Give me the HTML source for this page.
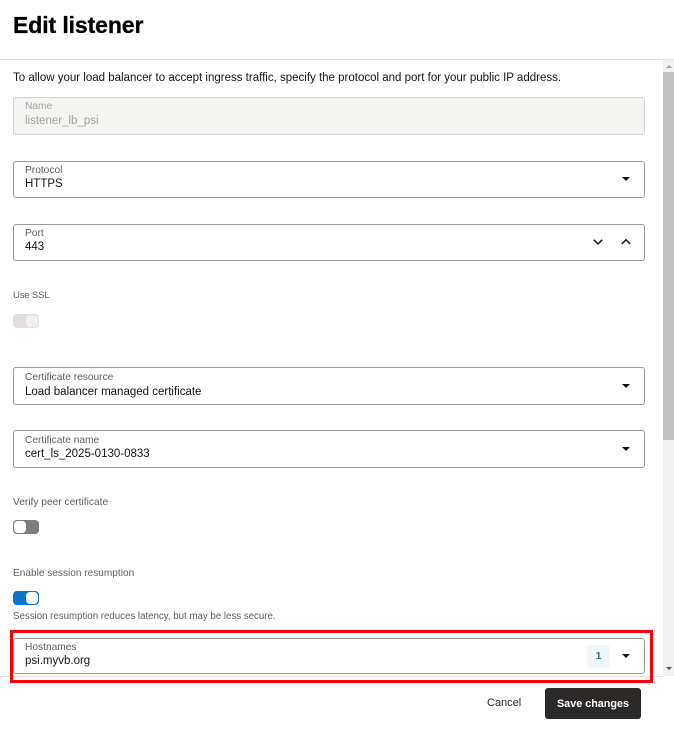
<!DOCTYPE html>
<html><head><meta charset="utf-8"><style>
html,body{margin:0;padding:0;background:#fff}
body{width:674px;height:734px;position:relative;overflow:hidden;font-family:"Liberation Sans",sans-serif;color:#161513}
div,span{position:absolute;white-space:nowrap}
.f{left:13px;width:630px;height:35px;border:1px solid #9c9a98;border-bottom:1.5px solid #9c9a98;border-radius:3px;background:#fff}
.l{left:25px;font-size:10.2px;line-height:12px;color:#5f5e5c}
.v{left:25px;font-size:11.5px;line-height:14px;color:#161513}
.h{left:13px;font-size:10.2px;line-height:12px;color:#5f5e5c}
.a{width:0;height:0;border-left:4px solid transparent;border-right:4px solid transparent;border-top:4px solid #161513;left:622px}
</style></head><body>
<div style="left:13px;top:10px;font-size:23px;font-weight:bold;line-height:30px;color:#000;-webkit-text-stroke:.3px #000;letter-spacing:-.1px">Edit listener</div>
<div style="left:0;top:59px;width:674px;height:1px;background:#e4e2e0"></div>
<div style="left:13px;top:71px;font-size:11.5px;line-height:15px;color:#161513">To allow your load balancer to accept ingress traffic, specify the protocol and port for your public IP address.</div>

<div class="f" style="top:97px;height:36px;background:#f4f4f3;border-color:#d4d3d1"></div>
<div class="l" style="top:101px;color:#a3a19f">Name</div>
<div class="v" style="top:114px;color:#a3a19f">listener_lb_psi</div>

<div class="f" style="top:161px"></div>
<div class="l" style="top:165px">Protocol</div>
<div class="v" style="top:177px">HTTPS</div>
<div class="a" style="top:177px"></div>

<div class="f" style="top:224px"></div>
<div class="l" style="top:228px">Port</div>
<div class="v" style="top:240px">443</div>
<svg style="position:absolute;left:592px;top:238px" width="40" height="9" viewBox="0 0 40 9"><path d="M1.8 1.8L6 6L10.2 1.8M29.8 6L34 1.8L38.2 6" fill="none" stroke="#161513" stroke-width="1.5"/></svg>

<div class="h" style="top:290px;font-size:9.6px;letter-spacing:-.2px">Use SSL</div>
<div style="left:13px;top:314px;width:26px;height:14px;border-radius:4px;background:#dfdedc"></div>
<div style="left:26px;top:315px;width:12px;height:12px;border-radius:4px;background:#f1f0ef"></div>

<div class="f" style="top:367px;height:36px"></div>
<div class="l" style="top:372px">Certificate resource</div>
<div class="v" style="top:385px">Load balancer managed certificate</div>
<div class="a" style="top:384px"></div>

<div class="f" style="top:430px;height:36px"></div>
<div class="l" style="top:435px">Certificate name</div>
<div class="v" style="top:447px">cert_ls_2025-0130-0833</div>
<div class="a" style="top:447px"></div>

<div class="h" style="top:497px">Verify peer certificate</div>
<div style="left:13px;top:520px;width:26px;height:14px;border-radius:4px;background:#7f7e7c"></div>
<div style="left:14px;top:521px;width:12px;height:12px;border-radius:4px;background:#fff"></div>

<div class="h" style="top:568px;font-size:10.1px">Enable session resumption</div>
<div style="left:13px;top:591px;width:26px;height:14px;border-radius:4px;background:#0f72c4"></div>
<div style="left:26px;top:592px;width:12px;height:12px;border-radius:4px;background:#fff"></div>
<div class="h" style="top:611px;font-size:9.7px">Session resumption reduces latency, but may be less secure.</div>

<div class="f" style="top:638px;height:34px"></div>
<div class="l" style="top:642px">Hostnames</div>
<div class="v" style="top:654px">psi.myvb.org</div>
<div style="left:587px;top:645px;width:23px;height:23px;border-radius:4px;background:#f1f6fb;color:#2f6ea8;font-size:10.5px;font-weight:bold;line-height:23px;text-align:center">1</div>
<div class="a" style="top:654px"></div>

<div style="left:0;top:676px;width:663px;height:1px;background:#e4e2e0"></div>
<div style="left:10px;top:630px;width:637px;height:47px;border:3px solid #f00"></div>

<div style="left:663px;top:60px;width:11px;height:616px;background:#f1f1f1"></div>
<div style="left:663px;top:72px;width:11px;height:368px;background:#c1c1c1"></div>
<div style="left:666px;top:65px;width:0;height:0;border-left:3px solid transparent;border-right:3px solid transparent;border-bottom:3px solid #a3a3a3"></div>
<div style="left:666px;top:667px;width:0;height:0;border-left:3px solid transparent;border-right:3px solid transparent;border-top:3px solid #505050"></div>

<div style="left:487px;top:696px;font-size:11px;line-height:14px;color:#2b2a28">Cancel</div>
<div style="left:545px;top:688px;width:96px;height:31px;border-radius:3px;background:#2b2a28;color:#fff;font-size:10.8px;font-weight:bold;line-height:32px;text-align:center">Save changes</div>
</body></html>
